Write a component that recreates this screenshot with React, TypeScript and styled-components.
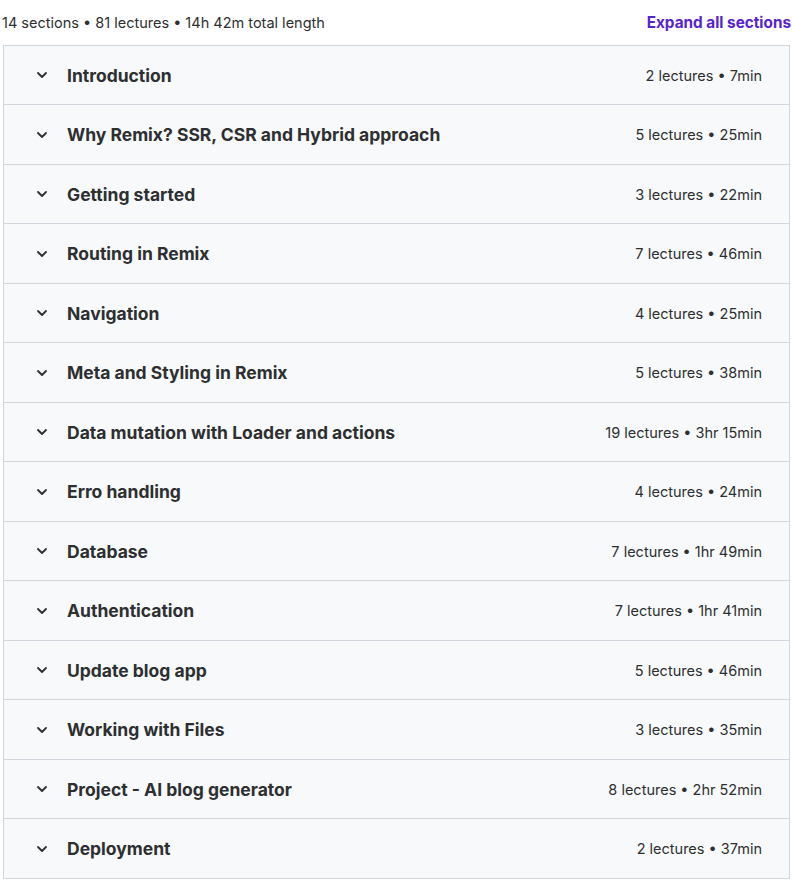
import React from 'react';
import styled, { createGlobalStyle } from 'styled-components';

const GlobalStyle = createGlobalStyle`
  body {
    margin: 0;
    background: #ffffff;
    font-family: Inter, "Noto Sans", sans-serif;
    color: #2d2f31;
  }
`;

type TSection = { title: string; meta: string };

const sections: TSection[] = [
  { title: 'Introduction', meta: '2 lectures • 7min' },
  { title: 'Why Remix? SSR, CSR and Hybrid approach', meta: '5 lectures • 25min' },
  { title: 'Getting started', meta: '3 lectures • 22min' },
  { title: 'Routing in Remix', meta: '7 lectures • 46min' },
  { title: 'Navigation', meta: '4 lectures • 25min' },
  { title: 'Meta and Styling in Remix', meta: '5 lectures • 38min' },
  { title: 'Data mutation with Loader and actions', meta: '19 lectures • 3hr 15min' },
  { title: 'Erro handling', meta: '4 lectures • 24min' },
  { title: 'Database', meta: '7 lectures • 1hr 49min' },
  { title: 'Authentication', meta: '7 lectures • 1hr 41min' },
  { title: 'Update blog app', meta: '5 lectures • 46min' },
  { title: 'Working with Files', meta: '3 lectures • 35min' },
  { title: 'Project - AI blog generator', meta: '8 lectures • 2hr 52min' },
  { title: 'Deployment', meta: '2 lectures • 37min' },
];

const Chevron = () => (
  <svg width="12" height="12" viewBox="0 0 12 12" fill="none">
    <path d="M2 4l4 4 4-4" stroke="#2d2f31" strokeWidth="1.8" strokeLinecap="round" strokeLinejoin="round" />
  </svg>
);

const App = () => {
  return (
    <Page>
      <GlobalStyle />
      <Summary>
        <span>14 sections • 81 lectures • 14h 42m total length</span>
        <ExpandButton>Expand all sections</ExpandButton>
      </Summary>
      <SectionList>
        {sections.map((section, index) => (
          <SectionRow key={index}>
            <ChevronWrap>
              <Chevron />
            </ChevronWrap>
            <SectionTitle>{section.title}</SectionTitle>
            <SectionMeta>{section.meta}</SectionMeta>
          </SectionRow>
        ))}
      </SectionList>
    </Page>
  );
};

export default App;

const Page = styled.div`
  width: 792px;
  padding: 0 2px 0 3px;
  box-sizing: border-box;
`;

const Summary = styled.div`
  height: 44.5px;
  display: flex;
  align-items: center;
  justify-content: space-between;
  margin-left: -1px;
  font-size: 14.5px;
  color: #2d2f31;
  padding-top: 1px;
  box-sizing: border-box;
`;

const ExpandButton = styled.span`
  font-weight: 700;
  font-size: 15.3px;
  color: #5624d0;
  margin-right: -1px;
`;

const SectionList = styled.div`
  border: 1px solid #d1d7dc;
  border-bottom: none;
`;

const SectionRow = styled.div`
  height: 59.5px;
  display: flex;
  align-items: center;
  padding: 1px 27px 0 32px;
  box-sizing: border-box;
  background: #f7f9fa;
  border-bottom: 1px solid #d1d7dc;
`;

const ChevronWrap = styled.span`
  display: flex;
  width: 12px;
  margin-right: 19px;
`;

const SectionTitle = styled.span`
  flex: 1;
  font-weight: 700;
  font-size: 17.5px;
`;

const SectionMeta = styled.span`
  font-size: 14.5px;
  color: #2d2f31;
`;
